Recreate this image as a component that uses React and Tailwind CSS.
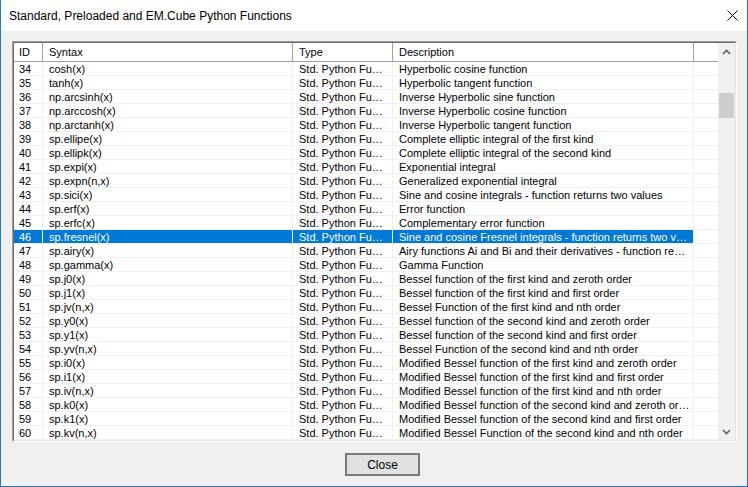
import React from "react"

const rows = [
  ["34", "cosh(x)", "Hyperbolic cosine function"],
  ["35", "tanh(x)", "Hyperbolic tangent function"],
  ["36", "np.arcsinh(x)", "Inverse Hyperbolic sine function"],
  ["37", "np.arccosh(x)", "Inverse Hyperbolic cosine function"],
  ["38", "np.arctanh(x)", "Inverse Hyperbolic tangent function"],
  ["39", "sp.ellipe(x)", "Complete elliptic integral of the first kind"],
  ["40", "sp.ellipk(x)", "Complete elliptic integral of the second kind"],
  ["41", "sp.expi(x)", "Exponential integral"],
  ["42", "sp.expn(n,x)", "Generalized exponential integral"],
  ["43", "sp.sici(x)", "Sine and cosine integrals - function returns two values"],
  ["44", "sp.erf(x)", "Error function"],
  ["45", "sp.erfc(x)", "Complementary error function"],
  ["46", "sp.fresnel(x)", "Sine and cosine Fresnel integrals - function returns two v…"],
  ["47", "sp.airy(x)", "Airy functions Ai and Bi and their derivatives - function re…"],
  ["48", "sp.gamma(x)", "Gamma Function"],
  ["49", "sp.j0(x)", "Bessel function of the first kind and zeroth order"],
  ["50", "sp.j1(x)", "Bessel function of the first kind and first order"],
  ["51", "sp.jv(n,x)", "Bessel Function of the first kind and nth order"],
  ["52", "sp.y0(x)", "Bessel function of the second kind and zeroth order"],
  ["53", "sp.y1(x)", "Bessel function of the second kind and first order"],
  ["54", "sp.yv(n,x)", "Bessel Function of the second kind and nth order"],
  ["55", "sp.i0(x)", "Modified Bessel function of the first kind and zeroth order"],
  ["56", "sp.i1(x)", "Modified Bessel function of the first kind and first order"],
  ["57", "sp.iv(n,x)", "Modified Bessel function of the first kind and nth order"],
  ["58", "sp.k0(x)", "Modified Bessel function of the second kind and zeroth or…"],
  ["59", "sp.k1(x)", "Modified Bessel function of the second kind and first order"],
  ["60", "sp.kv(n,x)", "Modified Bessel Function of the second kind and nth order"],
]

function Chevron({ down }) {
  return (
    <svg width="9" height="6" viewBox="0 0 9 6">
      <path
        d={down ? "M1 1 L4.5 4.5 L8 1" : "M1 5 L4.5 1.5 L8 5"}
        fill="none"
        stroke="#606060"
        strokeWidth="1.6"
      />
    </svg>
  )
}

function Row({ id, syntax, desc }) {
  const sel = id === "46"
  const cell = sel ? "bg-[#0078d7] text-white" : "text-black"
  return (
    <div className="flex h-[14px] leading-[14px] border-b border-[#f0f0f0]">
      <div className={`w-[29px] pl-[5px] border-r border-[#f0f0f0] whitespace-nowrap overflow-hidden ${cell}`}>{id}</div>
      <div className={`w-[250px] px-[6px] border-r border-[#f0f0f0] whitespace-nowrap overflow-hidden ${cell}`}>{syntax}</div>
      <div className={`w-[100px] px-[6px] border-r border-[#f0f0f0] whitespace-nowrap overflow-hidden ${cell}`}>Std. Python Fu…</div>
      <div className={`w-[301px] px-[6px] border-r border-[#f0f0f0] whitespace-nowrap overflow-hidden ${cell}`}>{desc}</div>
      <div className="w-[24px]"></div>
    </div>
  )
}

export default function App() {
  return (
    <div className="w-[748px] h-[487px] flex flex-col border-x border-b border-[#1c7acb] bg-[#f0f0f0] font-['Liberation_Sans',Arial,sans-serif] overflow-hidden">
      <div className="h-[31px] shrink-0 bg-white flex items-center justify-between pl-[8px] pr-[9px] text-[12px] text-black">
        <span>Standard, Preloaded and EM.Cube Python Functions</span>
        <svg width="11" height="11" viewBox="0 0 11 11">
          <path d="M0.5 0.5 L10.5 10.5 M10.5 0.5 L0.5 10.5" stroke="#000" strokeWidth="1" />
        </svg>
      </div>

      <div className="flex-1 flex flex-col pl-[11px] pt-[10px]">
        <div className="w-[725px] h-[401px] border-t border-l border-[#a0a0a0] border-r-white border-b-white border-r border-b">
          <div className="w-full h-full flex bg-white border-t border-l border-[#696969] border-r border-b border-r-[#e3e3e3] border-b-[#e3e3e3] overflow-hidden text-[11px]">
            <div className="w-[704px] flex flex-col overflow-hidden">
              <div className="flex h-[19px] shrink-0 leading-[19px] border-b border-[#a0a0a0] bg-white">
                <div className="w-[29px] pl-[5px] border-r border-[#a0a0a0]">ID</div>
                <div className="w-[250px] px-[6px] border-r border-[#a0a0a0]">Syntax</div>
                <div className="w-[100px] px-[6px] border-r border-[#a0a0a0]">Type</div>
                <div className="w-[301px] px-[6px] border-r border-[#a0a0a0]">Description</div>
                <div className="w-[24px]"></div>
              </div>
              {rows.map(([id, syntax, desc]) => (
                <Row key={id} id={id} syntax={syntax} desc={desc} />
              ))}
            </div>
            <div className="w-[17px] shrink-0 bg-[#f0f0f0] flex flex-col">
              <div className="h-[17px] flex items-center justify-center">
                <Chevron />
              </div>
              <div className="flex-1">
                <div className="mt-[33px] mx-[1px] h-[25px] bg-[#cdcdcd]"></div>
              </div>
              <div className="h-[17px] flex items-center justify-center">
                <Chevron down />
              </div>
            </div>
          </div>
        </div>

        <div className="flex pl-[333px] mt-[11px]">
          <button className="w-[75px] h-[23px] border-2 border-[#7a7a7a] bg-[#e1e1e1] text-[12px] text-black leading-none">
            Close
          </button>
        </div>
      </div>
    </div>
  )
}
